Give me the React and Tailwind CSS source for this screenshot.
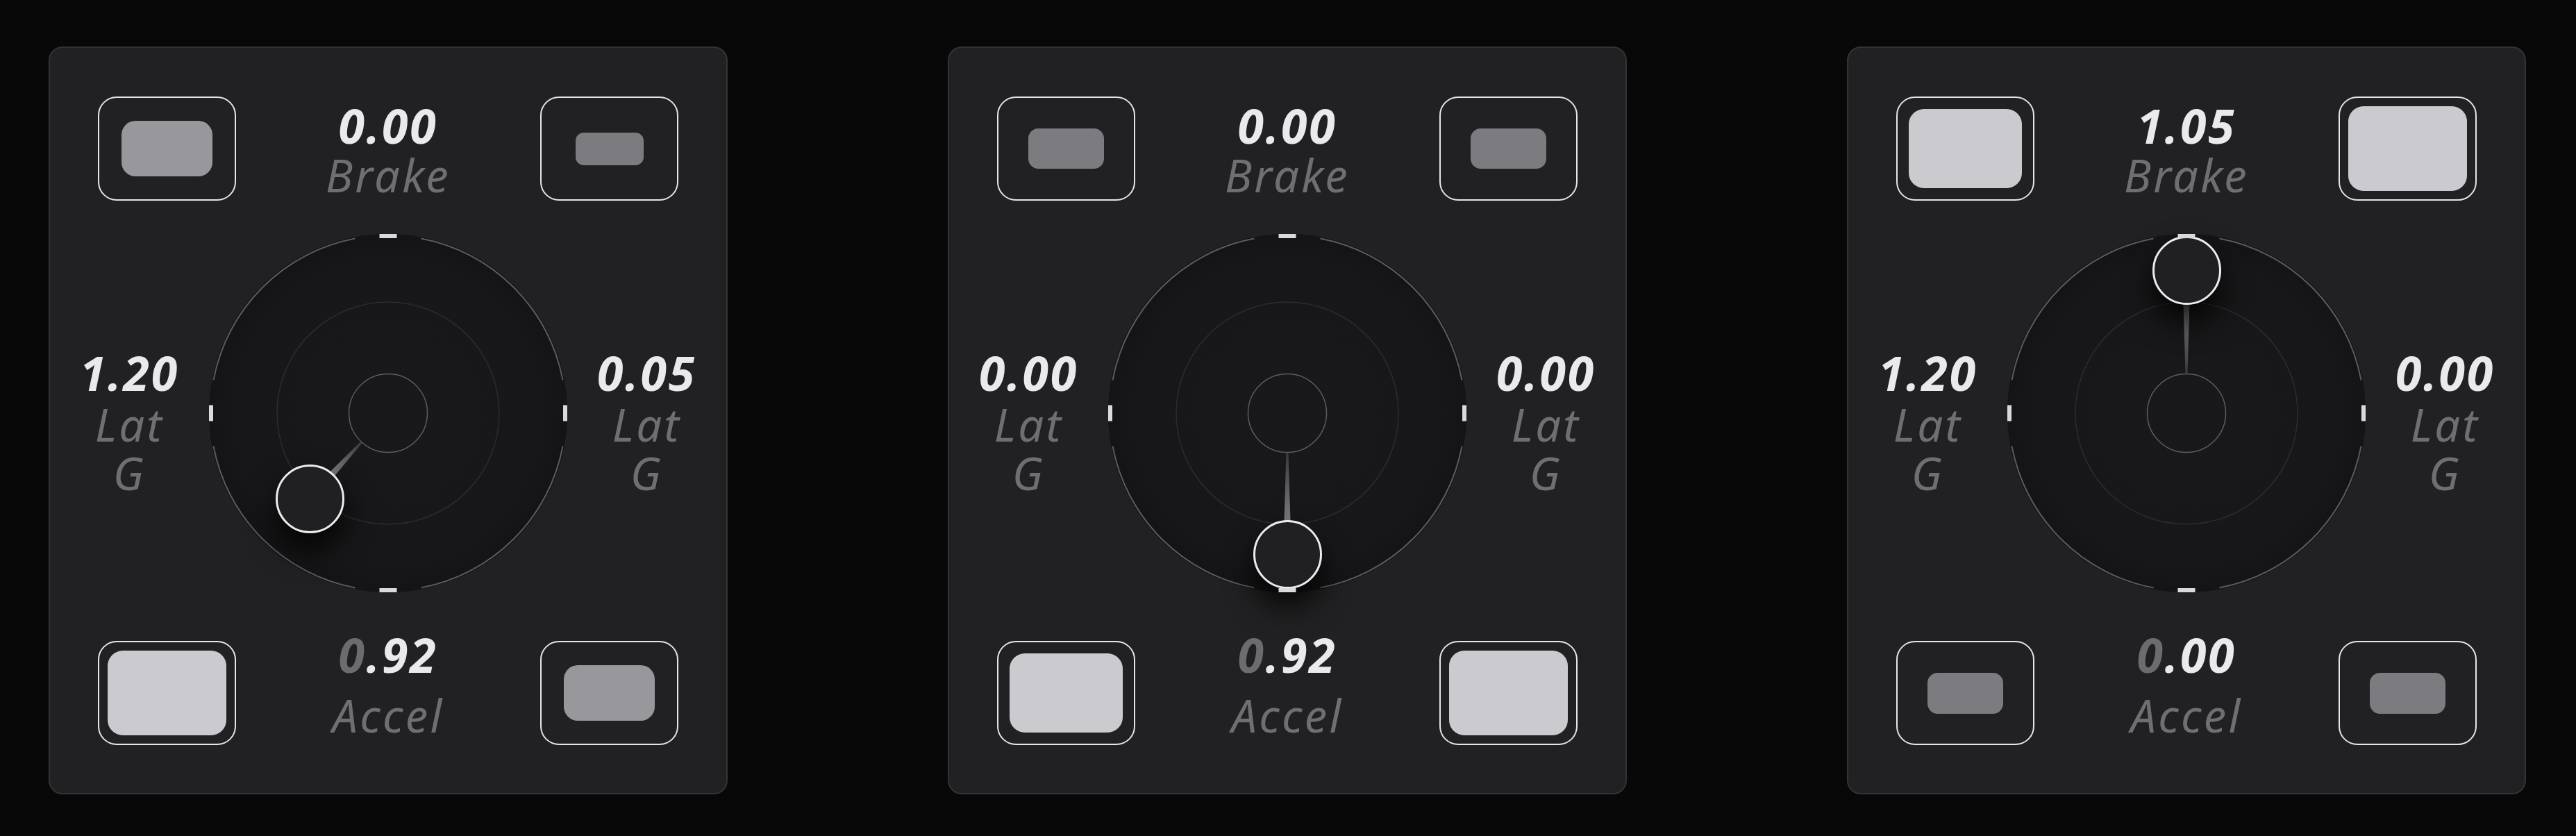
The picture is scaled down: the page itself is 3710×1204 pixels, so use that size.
import React from "react";

const panels = [
  { brake: "0.00", accel: "0.92", latL: "1.20", latR: "0.05", loads: [0.45, 0, 1, 0.45], knob: [-113, 123] },
  { brake: "0.00", accel: "0.92", latL: "0.00", latR: "0.00", loads: [0.15, 0.15, 0.89, 1], knob: [0, 203] },
  { brake: "1.05", accel: "0.00", latL: "1.20", latR: "0.00", loads: [0.89, 1, 0.16, 0.16], knob: [0, -206] },
];

const fontStack = "font-['Noto_Sans','Open_Sans','DejaVu_Sans',sans-serif]";

// wheel load box: inner pad grows with load
const LoadBox = ({ load, className = "" }) => {
  const w = 98 + 73 * load;
  const h = 47 + 75 * load;
  const r = Math.min(22, h * 0.25);
  const tone = load < 0.3 ? "bg-[#7c7b80]" : load < 0.7 ? "bg-[#98979c]" : "bg-[#cbcbcf]";

  return (
    <div className={`w-[199px] h-[150px] shrink-0 rounded-[27px] border-2 border-[#e6e6ea] flex items-center justify-center ${className}`}>
      <div className={tone} style={{ width: w, height: h, borderRadius: r }} />
    </div>
  );
};

const Value = ({ text, dimFirst }) => (
  <div className="text-[68px] leading-[72px] font-bold italic tracking-[0.04em] text-[#e9e9ee]">
    {dimFirst ? (
      <>
        <span className="text-[#6c6c70]">{text[0]}</span>
        {text.slice(1)}
      </>
    ) : (
      text
    )}
  </div>
);

const Label = ({ children, className = "" }) => (
  <div className={`text-[65px] leading-[71px] italic tracking-[0.05em] text-[#6f6f73] ${className}`}>{children}</div>
);

const LatCol = ({ value }) => (
  <div className="flex-1 self-stretch pt-[161px] text-center">
    <div className="text-[68px] leading-[78px] font-bold italic tracking-[0.04em] text-[#e9e9ee]">{value}</div>
    <div className="w-min mx-auto text-[65px] leading-[70px] italic tracking-[0.05em] text-[#6f6f73]">Lat G</div>
  </div>
);

const Gauge = ({ knob, id }) => {
  const [dx, dy] = knob;
  const c = 258;
  const len = Math.hypot(dx, dy);
  const ux = dx / len;
  const uy = dy / len;
  const px = -uy;
  const py = ux;
  const sx = c + ux * 57;
  const sy = c + uy * 57;
  const ex = c + ux * (len - 48);
  const ey = c + uy * (len - 48);
  const pts = [
    [sx + px * 1.5, sy + py * 1.5],
    [ex + px * 4.5, ey + py * 4.5],
    [ex - px * 4.5, ey - py * 4.5],
    [sx - px * 1.5, sy - py * 1.5],
  ]
    .map((p) => p.join(","))
    .join(" ");

  return (
    <div className="relative w-[516px] h-[516px] shrink-0 rounded-full bg-[#161618]">
      <svg className="absolute inset-0" width="516" height="516" viewBox="0 0 516 516">
        <defs>
          <radialGradient id={`disk-${id}`} cx="50%" cy="50%" r="50%">
            <stop offset="0%" stopColor="#19191b" />
            <stop offset="85%" stopColor="#171719" />
            <stop offset="100%" stopColor="#141416" />
          </radialGradient>
          <linearGradient id={`needle-${id}`} gradientUnits="userSpaceOnUse" x1={sx} y1={sy} x2={ex} y2={ey}>
            <stop offset="0%" stopColor="#3a3a3e" />
            <stop offset="100%" stopColor="#7a7a80" />
          </linearGradient>
        </defs>
        <circle cx={c} cy={c} r="258" fill={`url(#disk-${id})`} />
        <circle
          cx={c}
          cy={c}
          r="256"
          fill="none"
          stroke="#5b5b5f"
          strokeWidth="2"
          pathLength="360"
          strokeDasharray="68.6 21.4"
          strokeDashoffset="79.3"
        />
        <circle cx={c} cy={c} r="160" fill="none" stroke="#2c2c2f" strokeWidth="1.5" />
        <circle cx={c} cy={c} r="56.5" fill="none" stroke="#5d5d61" strokeWidth="1.5" />
        <polygon points={pts} fill={`url(#needle-${id})`} />
      </svg>

      <div
        className="absolute w-[99px] h-[99px] rounded-full border-[3px] border-[#ececf0] bg-[#202023] shadow-[0_24px_44px_rgba(0,0,0,0.85)]"
        style={{ left: c + dx - 49.5, top: c + dy - 49.5 }}
      />

      <svg className="absolute inset-0 pointer-events-none" width="516" height="516" viewBox="0 0 516 516">
        <rect x="245.5" y="0" width="25" height="6" fill="#dadada" />
        <rect x="245.5" y="510" width="25" height="6" fill="#dadada" />
        <rect x="0" y="246.5" width="6" height="23" fill="#dadada" />
        <rect x="510" y="246.5" width="6" height="23" fill="#dadada" />
      </svg>
    </div>
  );
};

const Panel = ({ data, id }) => {
  const [tl, tr, bl, br] = data.loads;
  return (
    <div className="w-[978px] h-[1077px] shrink-0 rounded-[20px] border-2 border-[#333335] bg-[#212123] flex flex-col">
      <div className="mt-[70px] flex items-start">
        <LoadBox load={tl} className="ml-[69px]" />
        <div className="flex-1 pt-[6px] text-center">
          <Value text={data.brake} />
          <Label>Brake</Label>
        </div>
        <LoadBox load={tr} className="mr-[69px]" />
      </div>

      <div className="mt-[48px] flex items-start">
        <LatCol value={data.latL} />
        <Gauge knob={data.knob} id={id} />
        <LatCol value={data.latR} />
      </div>

      <div className="mt-[70px] flex items-start">
        <LoadBox load={bl} className="ml-[69px]" />
        <div className="flex-1 -mt-4 text-center">
          <Value text={data.accel} dimFirst />
          <Label className="mt-[16px]">Accel</Label>
        </div>
        <LoadBox load={br} className="mr-[69px]" />
      </div>
    </div>
  );
};

export default function App() {
  return (
    <div className={`w-[3710px] h-[1204px] bg-[#080808] ${fontStack}`}>
      <div className="flex gap-[317px] pl-[70px] pt-[67px]">
        {panels.map((p, i) => (
          <Panel key={i} data={p} id={i} />
        ))}
      </div>
    </div>
  );
}
